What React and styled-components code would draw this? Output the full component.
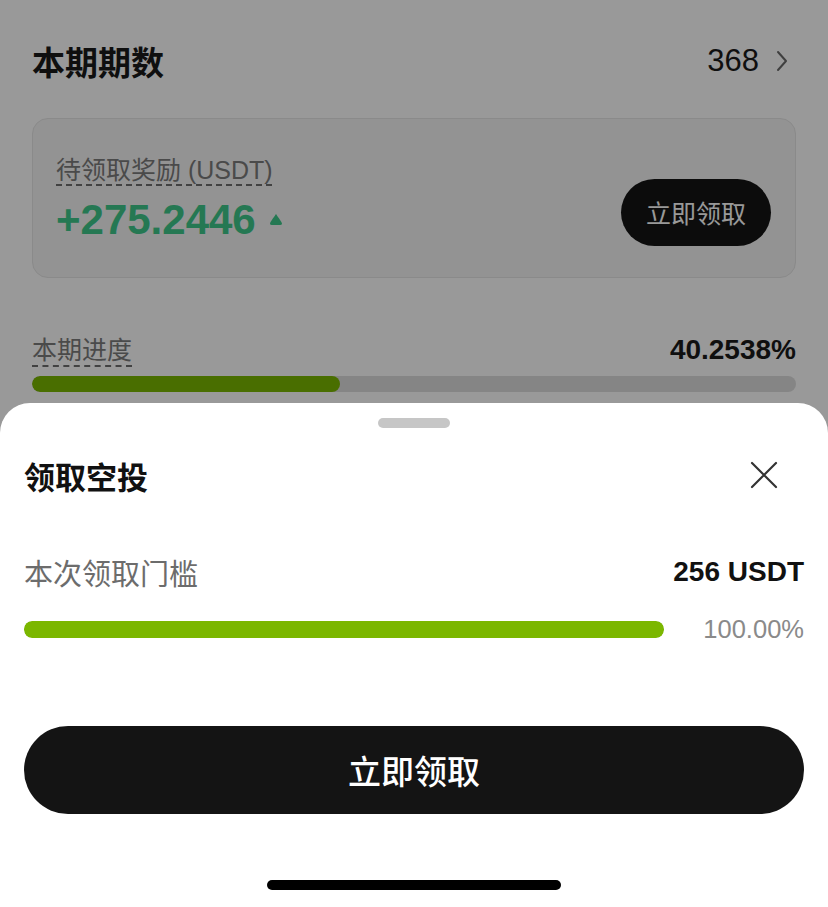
import React from "react";
import styled, { createGlobalStyle } from "styled-components";

const GlobalStyle = createGlobalStyle`
  html, body {
    margin: 0;
    padding: 0;
    background: #ffffff;
  }
  body {
    font-family: "Liberation Sans", "Noto Sans CJK SC", sans-serif;
    -webkit-font-smoothing: antialiased;
  }
`;

const Screen = styled.div`
  position: relative;
  width: 828px;
  height: 907px;
  overflow: hidden;
  background: #ffffff;
`;

const Page = styled.div`
  display: flex;
  flex-direction: column;
  padding: 34px 32px 0 32px;
`;

const HeaderRow = styled.div`
  display: flex;
  align-items: center;
  justify-content: space-between;
  height: 54px;
`;

const PageTitle = styled.div`
  font-size: 33px;
  font-weight: 700;
  color: #1a1a1a;
`;

const Period = styled.div`
  display: flex;
  align-items: center;
  gap: 17px;
  font-size: 31px;
  color: #1a1a1a;
  padding-right: 8px;
`;

const RewardCard = styled.div`
  margin-top: 30px;
  height: 160px;
  box-sizing: border-box;
  display: flex;
  align-items: center;
  justify-content: space-between;
  padding: 0 24px 0 23px;
  background: #f5f5f5;
  border: 1px solid #e6e6e6;
  border-radius: 16px;
`;

const RewardInfo = styled.div`
  display: flex;
  flex-direction: column;
  gap: 7px;
`;

const HintLabel = styled.span`
  align-self: flex-start;
  font-size: 25px;
  line-height: 36px;
  color: #7c7c7c;
  text-decoration: underline dashed #6e6e6e;
  text-decoration-thickness: 1.5px;
  text-underline-offset: 6px;
`;

const Amount = styled.div`
  display: flex;
  align-items: center;
  gap: 13px;
  font-size: 42px;
  line-height: 50px;
  font-weight: 700;
  color: #3ec98a;
`;

const SmallButton = styled.button`
  margin-top: 28px;
  height: 67px;
  padding: 0 25px;
  border: none;
  border-radius: 34px;
  background: #141414;
  color: #ffffff;
  font-family: inherit;
  font-size: 25px;
`;

const ProgressHead = styled.div`
  margin-top: 54px;
  display: flex;
  align-items: center;
  justify-content: space-between;
`;

const ProgressValue = styled.span`
  font-size: 28px;
  font-weight: 600;
  color: #1a1a1a;
`;

const Track = styled.div`
  flex: ${(p) => (p.grow ? 1 : "none")};
  height: ${(p) => p.h || 16}px;
  margin-top: ${(p) => p.mt || 0}px;
  border-radius: 8px;
  background: ${(p) => p.bg || "#dedede"};
  overflow: hidden;
`;

const Fill = styled.div`
  height: 100%;
  border-radius: 8px;
  background: #7bb700;
`;

const Dim = styled.div`
  position: absolute;
  inset: 0;
  background: rgba(0, 0, 0, 0.4);
`;

const Sheet = styled.div`
  position: absolute;
  left: 0;
  right: 0;
  bottom: 0;
  height: 504px;
  background: #ffffff;
  border-radius: 30px 30px 0 0;
  display: flex;
  flex-direction: column;
  padding: 0 24px;
`;

const Handle = styled.div`
  align-self: center;
  width: 72px;
  height: 10px;
  margin-top: 15px;
  border-radius: 5px;
  background: #c6c6c6;
`;

const SheetHeader = styled.div`
  margin-top: 23px;
  height: 48px;
  display: flex;
  align-items: center;
  justify-content: space-between;
  padding-right: 26px;
`;

const SheetTitle = styled.div`
  font-size: 31px;
  font-weight: 700;
  color: #111111;
`;

const InfoRow = styled.div`
  margin-top: 53px;
  height: 40px;
  display: flex;
  align-items: center;
  justify-content: space-between;
`;

const InfoLabel = styled.span`
  font-size: 29px;
  color: #6c6c6c;
`;

const InfoValue = styled.span`
  font-size: 28px;
  font-weight: 700;
  color: #111111;
`;

const BarRow = styled.div`
  margin-top: 22px;
  height: 30px;
  display: flex;
  align-items: center;
  gap: 39px;
`;

const Percent = styled.span`
  font-size: 25.5px;
  color: #8a8a8a;
`;

const MainButton = styled.button`
  margin-top: 82px;
  height: 88px;
  border: none;
  border-radius: 44px;
  background: #141414;
  color: #ffffff;
  font-family: inherit;
  font-size: 33px;
  font-weight: 500;
`;

const HomeBar = styled.div`
  align-self: center;
  margin-top: 66px;
  width: 294px;
  height: 10px;
  border-radius: 5px;
  background: #000000;
`;

const Chevron = () => (
  <svg width="12" height="22" viewBox="0 0 12 22" fill="none">
    <path d="M2 2 L10 11 L2 20" stroke="#6a6a6a" strokeWidth="2" strokeLinecap="round" strokeLinejoin="round" />
  </svg>
);

const UpMark = () => (
  <svg width="14" height="13" viewBox="0 0 13 12">
    <path d="M6.5 1 C7.5 2.5 11.5 8 12 9.5 C12.3 10.6 11.6 11 10.5 11 L2.5 11 C1.4 11 0.7 10.6 1 9.5 C1.5 8 5.5 2.5 6.5 1 Z" fill="#3ec98a" />
  </svg>
);

const CloseIcon = () => (
  <svg width="28" height="28" viewBox="0 0 28 28" fill="none">
    <path d="M2 2 L26 26 M26 2 L2 26" stroke="#333333" strokeWidth="2.2" strokeLinecap="round" />
  </svg>
);

export default function App() {
  const progress = 40.2538;
  return (
    <>
      <GlobalStyle />
      <Screen>
        <Page>
          <HeaderRow>
            <PageTitle>本期期数</PageTitle>
            <Period>
              368
              <Chevron />
            </Period>
          </HeaderRow>
          <RewardCard>
            <RewardInfo>
              <HintLabel>待领取奖励 (USDT)</HintLabel>
              <Amount>
                +275.2446
                <UpMark />
              </Amount>
            </RewardInfo>
            <SmallButton>立即领取</SmallButton>
          </RewardCard>
          <ProgressHead>
            <HintLabel>本期进度</HintLabel>
            <ProgressValue>{progress}%</ProgressValue>
          </ProgressHead>
          <Track mt={8}>
            <Fill style={{ width: `${progress}%` }} />
          </Track>
        </Page>
        <Dim />
        <Sheet>
          <Handle />
          <SheetHeader>
            <SheetTitle>领取空投</SheetTitle>
            <CloseIcon />
          </SheetHeader>
          <InfoRow>
            <InfoLabel>本次领取门槛</InfoLabel>
            <InfoValue>256 USDT</InfoValue>
          </InfoRow>
          <BarRow>
            <Track grow h={17} bg="#eeeeee">
              <Fill style={{ width: "100%" }} />
            </Track>
            <Percent>100.00%</Percent>
          </BarRow>
          <MainButton>立即领取</MainButton>
          <HomeBar />
        </Sheet>
      </Screen>
    </>
  );
}
